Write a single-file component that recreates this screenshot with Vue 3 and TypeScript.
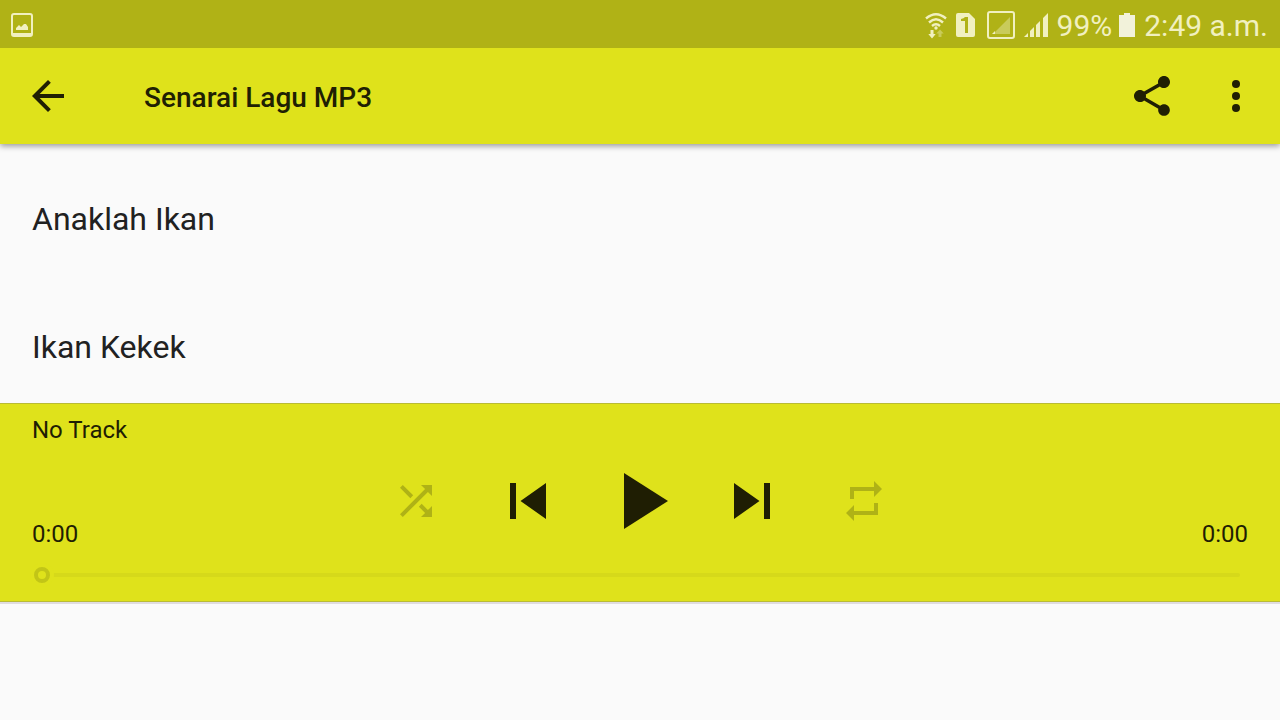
<script setup lang="ts">
import { ref } from 'vue'

interface Control {
  id: string
  label: string
  size: 'small' | 'medium' | 'large'
  muted: boolean
  path: string
}

const songs: string[] = ['Anaklah Ikan', 'Ikan Kekek']
const position = ref<number>(0)

const controls: Control[] = [
  {
    id: 'shuffle',
    label: 'Shuffle',
    size: 'small',
    muted: true,
    path: 'M10.59 9.17L5.41 4 4 5.41l5.17 5.17 1.42-1.41zM14.5 4l2.04 2.04L4 18.59 5.41 20 17.96 7.46 20 9.5V4h-5.5zm.33 9.41l-1.41 1.41 3.13 3.13L14.5 20H20v-5.5l-2.04 2.04-3.13-3.13z',
  },
  { id: 'previous', label: 'Previous', size: 'medium', muted: false, path: 'M6 6h2v12H6zm3.5 6l8.5 6V6z' },
  { id: 'play', label: 'Play', size: 'large', muted: false, path: 'M8 5v14l11-7z' },
  { id: 'next', label: 'Next', size: 'medium', muted: false, path: 'M6 18l8.5-6L6 6v12zM16 6v12h2V6h-2z' },
  {
    id: 'repeat',
    label: 'Repeat',
    size: 'small',
    muted: true,
    path: 'M7 7h10v3l4-4-4-4v3H5v6h2V7zm10 10H7v-3l-4 4 4 4v-3h12v-6h-2v4z',
  },
]
</script>

<template>
  <div class="screen">
    <div class="status">
      <svg class="notice" width="22" height="24" viewBox="0 0 22 24" aria-hidden="true">
        <rect x="1" y="1" width="20" height="22" rx="2" fill="none" stroke="currentColor" stroke-width="2" />
        <path d="M1 20h20v2q0 1-1 1H2q-1 0-1-1z" fill="currentColor" />
        <path d="M5 17v-2l3-3 2 2 3-3h2l2 3v3z" fill="currentColor" />
      </svg>
      <div class="system">
        <svg width="22" height="28" viewBox="0 0 22 28" aria-hidden="true">
          <g fill="none" stroke="currentColor" stroke-width="2.4">
            <path d="M1 7.500q10-8.500 20 0" />
            <path d="M4 11.500q7-6.500 14 0" />
            <path d="M7 15q4-3.500 8 0" />
          </g>
          <circle cx="11" cy="17" r="1.700" fill="currentColor" />
          <path d="M5.500 19h3v4h2.200L7 27.500 3.300 23h2.200z" fill="currentColor" />
          <path d="M13.500 26h3v-3.500h2.200L15 18.500l-3.700 4h2.200z" fill="currentColor" opacity=".4" />
        </svg>
        <svg class="sim" width="19" height="24" viewBox="0 0 19 24" aria-hidden="true">
          <path d="M2 0h11l6 6v16q0 2-2 2H2q-2 0-2-2V2q0-2 2-2z" fill="currentColor" />
          <path d="M5 6q3-.5 4-2h3v16H9V8H5z" fill="#b0b216" />
        </svg>
        <svg class="nosim" width="28" height="28" viewBox="0 0 28 28" aria-hidden="true">
          <rect x="1" y="1" width="26" height="26" rx="2" fill="none" stroke="currentColor" stroke-width="2" />
          <path d="M8 23v-2L23 6v17z" fill="currentColor" opacity=".4" />
          <path d="M5 23l3-3v3z" fill="currentColor" />
        </svg>
        <svg class="signal" width="24" height="24" viewBox="0 0 24 24" aria-hidden="true">
          <path d="M0 24l4-4v4zM6 24v-6l4-4v10zM12 24V12l4-4v16zM19 24V5l5-5v24z" fill="currentColor" />
        </svg>
        <span class="percent">99%</span>
        <svg class="battery" width="16" height="24" viewBox="0 0 16 24" aria-hidden="true">
          <path d="M5 0h6v2h5v22H0V2h5z" fill="currentColor" />
        </svg>
        <span class="clock">2:49 a.m.</span>
      </div>
    </div>

    <header class="bar">
      <button class="icon" type="button" aria-label="Back">
        <svg width="48" height="48" viewBox="0 0 24 24">
          <path d="M20 11H7.830l5.590-5.590L12 4l-8 8 8 8 1.410-1.410L7.830 13H20v-2z" />
        </svg>
      </button>
      <h1>Senarai Lagu MP3</h1>
      <button class="icon" type="button" aria-label="Share">
        <svg width="48" height="48" viewBox="0 0 24 24">
          <path d="M18 16.080c-.76 0-1.440.3-1.960.77L8.910 12.700c.05-.23.09-.46.09-.7s-.04-.47-.09-.7l7.050-4.110c.54.5 1.250.81 2.040.81 1.660 0 3-1.340 3-3s-1.340-3-3-3-3 1.340-3 3c0 .24.04.47.09.7L8.040 9.810C7.500 9.310 6.790 9 6 9c-1.660 0-3 1.340-3 3s1.340 3 3 3c.79 0 1.500-.31 2.040-.81l7.120 4.160c-.05.21-.08.43-.08.65 0 1.610 1.310 2.920 2.920 2.920s2.920-1.310 2.920-2.920-1.310-2.920-2.920-2.920z" />
        </svg>
      </button>
      <button class="icon more" type="button" aria-label="More options">
        <svg width="48" height="48" viewBox="0 0 24 24">
          <circle cx="12" cy="6" r="2" />
          <circle cx="12" cy="12" r="2" />
          <circle cx="12" cy="18" r="2" />
        </svg>
      </button>
    </header>

    <main class="songs">
      <ul>
        <li v-for="song in songs" :key="song">
          <button type="button" class="song">{{ song }}</button>
        </li>
      </ul>
    </main>

    <section class="player" aria-label="Player">
      <div class="track">No Track</div>
      <div class="controls">
        <button
          v-for="control in controls"
          :key="control.id"
          type="button"
          class="control"
          :class="[control.size, { muted: control.muted }]"
          :aria-label="control.label"
        >
          <svg viewBox="0 0 24 24"><path :d="control.path" /></svg>
        </button>
      </div>
      <div class="times">
        <span>0:00</span>
        <span>0:00</span>
      </div>
      <input v-model.number="position" class="seek" type="range" min="0" max="100" aria-label="Position" />
    </section>
    <footer class="foot"></footer>
  </div>
</template>

<style>
body {
  margin: 0;
}
</style>

<style scoped>
.screen {
  display: flex;
  flex-direction: column;
  height: 100vh;
  overflow: hidden;
  background: #fafafa;
  color: #212121;
  font-family: Roboto, "Noto Sans", sans-serif;
}
button {
  margin: 0;
  padding: 0;
  border: 0;
  background: none;
  color: inherit;
  font: inherit;
  cursor: pointer;
}
svg {
  display: block;
  flex: none;
}
.status {
  position: relative;
  z-index: 1;
  display: flex;
  flex: none;
  align-items: center;
  justify-content: space-between;
  height: 48px;
  padding: 2px 12px 0 11px;
  box-sizing: border-box;
  background: #b0b216;
  color: #f1f0c0;
  font-size: 30px;
  line-height: 48px;
}
.system {
  display: flex;
  align-items: center;
}
.percent,
.clock {
  padding-top: 2px;
  line-height: 46px;
}
.sim {
  margin-left: 9px;
}
.nosim {
  margin-left: 12px;
}
.signal {
  margin-left: 9px;
}
.percent {
  margin-left: 9px;
}
.battery {
  margin-left: 7px;
  color: #f2f2da;
}
.clock {
  margin-left: 9px;
}
.bar {
  position: relative;
  display: flex;
  flex: none;
  align-items: center;
  height: 96px;
  padding: 0 20px 0 24px;
  box-sizing: border-box;
  background: #dfe21b;
  box-shadow: 0 2px 6px rgba(0, 0, 0, 0.4);
  color: #201f03;
}
.icon svg,
.control svg {
  fill: currentColor;
}
.bar h1 {
  flex: 1;
  margin: 0 0 0 72px;
  padding-top: 4px;
  font-size: 28px;
  font-weight: 500;
  line-height: 32px;
}
.more {
  margin-left: 36px;
}
.songs {
  flex: 1 1 0;
  min-height: 0;
  overflow: hidden;
}
.songs ul {
  margin: 0;
  padding: 11px 0 0;
  list-style: none;
}
.song {
  display: block;
  width: 100%;
  height: 128px;
  padding: 0 32px;
  font-size: 32px;
  line-height: 40px;
  text-align: left;
}
.player {
  position: relative;
  flex: none;
  height: 199px;
  box-sizing: border-box;
  border-top: 1px solid #b9bb35;
  border-bottom: 1px solid #b9bb35;
  background: #dfe21b;
  box-shadow: 0 2px 0 #e0dce0;
  color: #1f1e03;
  font-size: 24px;
  line-height: 28px;
}
.track {
  padding: 12px 32px 0;
}
.controls {
  display: flex;
  align-items: center;
  justify-content: center;
  height: 96px;
  margin-top: 9px;
}
.control {
  display: flex;
  align-items: center;
  justify-content: center;
  width: 112px;
  height: 96px;
}
.small svg {
  width: 48px;
}
.medium svg {
  width: 72px;
}
.large svg {
  width: 96px;
}
.muted {
  color: #afb216;
}
.times {
  display: flex;
  justify-content: space-between;
  margin-top: -29px;
  padding: 0 32px;
  pointer-events: none;
}
.seek {
  display: block;
  width: calc(100% - 74px);
  height: 20px;
  margin: 17px 40px 0 34px;
  appearance: none;
  background: transparent;
}
.seek::-webkit-slider-runnable-track {
  height: 4px;
  border-radius: 2px;
  background: #d6d91a;
}
.seek::-webkit-slider-thumb {
  width: 16px;
  height: 16px;
  margin-top: -6px;
  box-sizing: border-box;
  border: 4px solid #c2c517;
  border-radius: 50%;
  appearance: none;
  background: #dfe21b;
  box-shadow: 0 0 0 4px #dfe21b;
}
.foot {
  flex: none;
  height: 118px;
}
</style>
